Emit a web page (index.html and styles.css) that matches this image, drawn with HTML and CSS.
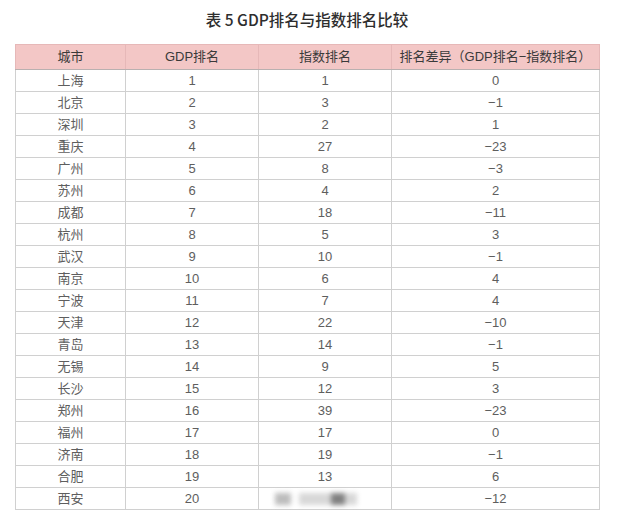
FILE: index.html
```html
<!DOCTYPE html>
<html lang="zh">
<head>
<meta charset="utf-8">
<link rel="stylesheet" href="styles.css">
</head>
<body>
<div class="page">
  <h1 class="title">表 5 GDP排名与指数排名比较</h1>
  <table class="rank">
    <colgroup>
      <col class="c1"><col class="c2"><col class="c3"><col class="c4">
    </colgroup>
    <thead>
      <tr><th>城市</th><th>GDP排名</th><th>指数排名</th><th>排名差异（GDP排名−指数排名）</th></tr>
    </thead>
    <tbody>
      <tr><td>上海</td><td>1</td><td>1</td><td>0</td></tr>
      <tr><td>北京</td><td>2</td><td>3</td><td>−1</td></tr>
      <tr><td>深圳</td><td>3</td><td>2</td><td>1</td></tr>
      <tr><td>重庆</td><td>4</td><td>27</td><td>−23</td></tr>
      <tr><td>广州</td><td>5</td><td>8</td><td>−3</td></tr>
      <tr><td>苏州</td><td>6</td><td>4</td><td>2</td></tr>
      <tr><td>成都</td><td>7</td><td>18</td><td>−11</td></tr>
      <tr><td>杭州</td><td>8</td><td>5</td><td>3</td></tr>
      <tr><td>武汉</td><td>9</td><td>10</td><td>−1</td></tr>
      <tr><td>南京</td><td>10</td><td>6</td><td>4</td></tr>
      <tr><td>宁波</td><td>11</td><td>7</td><td>4</td></tr>
      <tr><td>天津</td><td>12</td><td>22</td><td>−10</td></tr>
      <tr><td>青岛</td><td>13</td><td>14</td><td>−1</td></tr>
      <tr><td>无锡</td><td>14</td><td>9</td><td>5</td></tr>
      <tr><td>长沙</td><td>15</td><td>12</td><td>3</td></tr>
      <tr><td>郑州</td><td>16</td><td>39</td><td>−23</td></tr>
      <tr><td>福州</td><td>17</td><td>17</td><td>0</td></tr>
      <tr><td>济南</td><td>18</td><td>19</td><td>−1</td></tr>
      <tr><td>合肥</td><td>19</td><td>13</td><td>6</td></tr>
      <tr><td>西安</td><td>20</td><td class="wm-cell"><span class="wm"><span class="wm-a"></span><span class="wm-b"></span><span class="wm-c"></span></span></td><td>−12</td></tr>
    </tbody>
  </table>
</div>
</body>
</html>
```
FILE: styles.css
```css
html, body {
  margin: 0;
  padding: 0;
  background: #ffffff;
}
body {
  font-family: "Liberation Sans", "Noto Sans CJK SC", sans-serif;
  color: #5e5e5e;
}
.page {
  padding: 0 0 0 15px;
  width: 584px;
}
.title {
  margin: 0;
  height: 44px;
  line-height: 38px;
  font-family: "Noto Sans CJK SC", sans-serif;
  font-size: 15.5px;
  font-weight: 500;
  color: #2e2e2e;
  text-align: center;
  white-space: nowrap;
}
.rank {
  border-collapse: collapse;
  table-layout: fixed;
  width: 584px;
  font-size: 13px;
}
.c1 { width: 110px; }
.c2 { width: 133px; }
.c3 { width: 133px; }
.c4 { width: 208px; }
.rank th {
  background: #f3c7c6;
  color: #3a3a3a;
  font-weight: 400;
  height: 24px;
  padding: 0;
  border: 1px solid #e6b8b8;
  border-bottom: 1px solid #b9b0b0;
  text-align: center;
  white-space: nowrap;
  line-height: 24px;
}
.rank td {
  height: 21px;
  padding: 0;
  border: 1px solid #d0d0d0;
  text-align: center;
  line-height: 21px;
  white-space: nowrap;
}
.wm-cell {
  position: relative;
}
.wm {
  position: absolute;
  left: 12px;
  top: 3px;
  width: 100px;
  height: 16px;
  filter: blur(2.5px);
}
.wm-a, .wm-b, .wm-c {
  position: absolute;
  top: 2px;
  height: 12px;
}
.wm-a { left: 4px; width: 16px; background: #bdbdbd; }
.wm-b { left: 28px; width: 58px; background: #d8d8d8; }
.wm-c { left: 60px; width: 14px; background: #808080; }
```
